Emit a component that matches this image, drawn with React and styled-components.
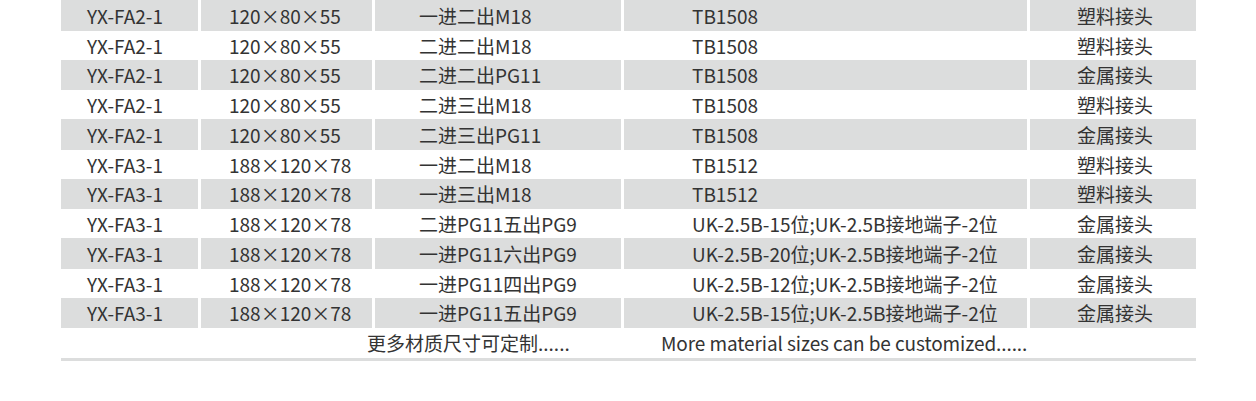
import React from 'react';
import styled, { createGlobalStyle } from 'styled-components';

const GlobalStyle = createGlobalStyle`
  body {
    margin: 0;
    background: #ffffff;
    font-family: "Noto Sans CJK SC", "Noto Sans", sans-serif;
  }
`;

const columns = [
  { width: 137, pad: 26 },
  { width: 171, pad: 28 },
  { width: 246, pad: 44 },
  { width: 403, pad: 68 },
  { width: 166, pad: 47 },
];

const rows = [
  ['YX-FA2-1', '120×80×55', '一进二出M18', 'TB1508', '塑料接头'],
  ['YX-FA2-1', '120×80×55', '二进二出M18', 'TB1508', '塑料接头'],
  ['YX-FA2-1', '120×80×55', '二进二出PG11', 'TB1508', '金属接头'],
  ['YX-FA2-1', '120×80×55', '二进三出M18', 'TB1508', '塑料接头'],
  ['YX-FA2-1', '120×80×55', '二进三出PG11', 'TB1508', '金属接头'],
  ['YX-FA3-1', '188×120×78', '一进二出M18', 'TB1512', '塑料接头'],
  ['YX-FA3-1', '188×120×78', '一进三出M18', 'TB1512', '塑料接头'],
  ['YX-FA3-1', '188×120×78', '二进PG11五出PG9', 'UK-2.5B-15位;UK-2.5B接地端子-2位', '金属接头'],
  ['YX-FA3-1', '188×120×78', '一进PG11六出PG9', 'UK-2.5B-20位;UK-2.5B接地端子-2位', '金属接头'],
  ['YX-FA3-1', '188×120×78', '一进PG11四出PG9', 'UK-2.5B-12位;UK-2.5B接地端子-2位', '金属接头'],
  ['YX-FA3-1', '188×120×78', '一进PG11五出PG9', 'UK-2.5B-15位;UK-2.5B接地端子-2位', '金属接头'],
];

const Table = styled.div`
  display: flex;
  flex-direction: column;
  width: 1135px;
  margin-left: 61px;
  color: #333333;
  font-size: 19px;
`;

const Row = styled.div`
  display: grid;
  grid-template-columns: ${columns.map((c) => `${c.width}px`).join(' ')};
  column-gap: 3px;
  height: ${({ $shaded }) => ($shaded ? '30.5px' : '29px')};
`;

const Cell = styled.div`
  display: flex;
  align-items: center;
  padding-left: ${({ $pad }) => $pad}px;
  background: ${({ $shaded }) => ($shaded ? '#dcdddd' : 'transparent')};
  white-space: nowrap;
`;

const Footer = styled.div`
  display: flex;
  align-items: center;
  height: 29.5px;
  padding-left: 306px;
  border-bottom: 3px solid #dcdddd;
`;

const FooterText = styled.span`
  width: ${({ $width }) => ($width ? `${$width}px` : 'auto')};
  letter-spacing: ${({ $tight }) => ($tight ? '-0.09px' : 'normal')};
  white-space: nowrap;
`;

function App() {
  return (
    <>
      <GlobalStyle />
      <Table>
        {rows.map((row, i) => {
          const shaded = i % 2 === 0;
          return (
            <Row key={i} $shaded={shaded}>
              {row.map((text, j) => (
                <Cell key={j} $pad={columns[j].pad} $shaded={shaded}>
                  {text}
                </Cell>
              ))}
            </Row>
          );
        })}
        <Footer>
          <FooterText $width={294}>更多材质尺寸可定制......</FooterText>
          <FooterText $tight>More material sizes can be customized......</FooterText>
        </Footer>
      </Table>
    </>
  );
}

export default App;
